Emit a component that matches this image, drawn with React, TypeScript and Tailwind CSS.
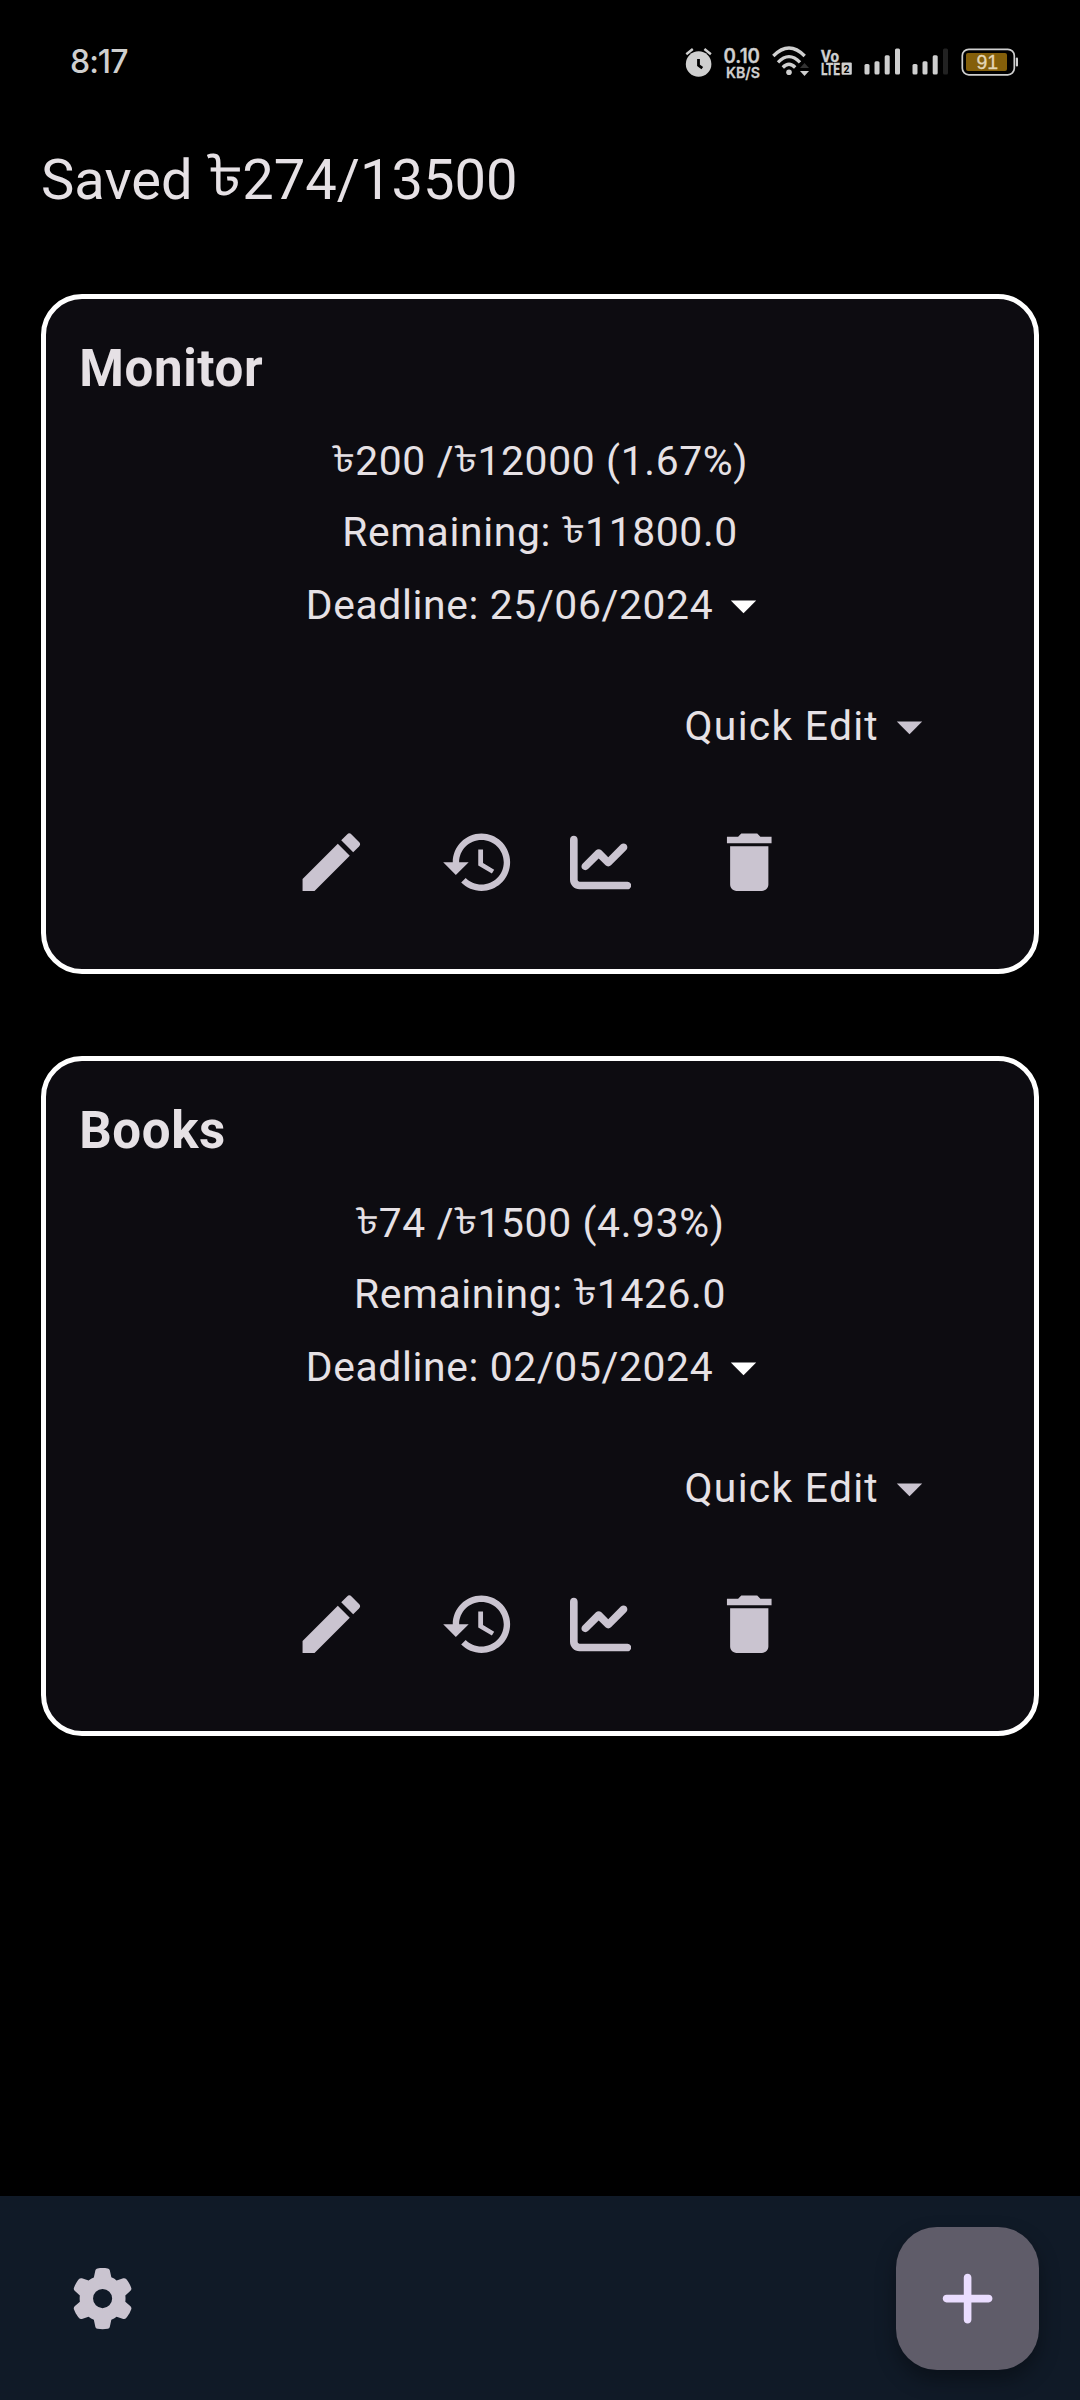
import { FaChartLine, FaGear, FaPlus } from "react-icons/fa6";

type Goal = { name: string; saved: string; target: string; percent: string; remaining: string; deadline: string };

const goals: Goal[] = [
  { name: "Monitor", saved: "200", target: "12000", percent: "1.67", remaining: "11800.0", deadline: "25/06/2024" },
  { name: "Books", saved: "74", target: "1500", percent: "4.93", remaining: "1426.0", deadline: "02/05/2024" },
];

function Taka({ className }: { className: string }) {
  return <span className={`inline-block font-["Noto_Sans_Bengali_UI",Roboto,sans-serif] leading-none ${className}`}>৳</span>;
}

const smallTaka = <Taka className="-translate-y-[3.5px] text-[35.7px]" />;

function Caret({ className }: { className: string }) {
  return (
    <svg viewBox="0 0 24 24" className={className} fill="currentColor">
      <path d="M7 10l5 5 5-5z" />
    </svg>
  );
}

function StatusBar() {
  return (
    <header className="flex h-[123px] items-center justify-between pr-[40px] pl-[70px] text-[#cfcfcf]">
      <span className="font-[Inter] text-[32px] font-medium tracking-[-1px]">8:17</span>
      <svg width="380" height="70" viewBox="0 0 380 70" fill="currentColor" className="mt-[7px] shrink-0">
        <circle cx="38.6" cy="34" r="12.8" />
        <path d="M26.3 24.3L32.8 19M50.9 24.3L44.4 19" stroke="currentColor" strokeWidth="2.4" />
        <path d="M38.5 29v6.300l3.800 2.900" stroke="#000" strokeWidth="2.800" fill="none" />
        <text x="63.5" y="33" fontSize="19.5" fontWeight="600" fontFamily="Inter" stroke="currentColor" strokeWidth="0.3" textLength="36.5" lengthAdjust="spacingAndGlyphs">0.10</text>
        <text x="66" y="47.5" fontSize="15" fontWeight="600" fontFamily="Inter" stroke="currentColor" strokeWidth="0.3" textLength="34" lengthAdjust="spacingAndGlyphs">KB/S</text>
        <g fill="none" stroke="currentColor" strokeWidth="3.3">
          <path d="M113.300 26Q129 10 144.700 26" />
          <path d="M118 32.300Q129 20.800 140 32.300" />
          <path d="M122.800 37.500Q129 31 135.200 37.500" />
        </g>
        <circle cx="129" cy="42.2" r="2.8" />
        <path d="M140 38l4.500-5 4.500 5z" fill="#333" />
        <path d="M140 41l4.500 5 4.500-5z" />
        <text x="161" y="31.5" fontSize="16.5" fontWeight="700" fontFamily="Roboto" stroke="currentColor" strokeWidth="0.4" textLength="18" lengthAdjust="spacingAndGlyphs">Vo</text>
        <text x="161" y="44.7" fontSize="16.5" fontWeight="700" fontFamily="Roboto" stroke="currentColor" strokeWidth="0.4" textLength="19" lengthAdjust="spacingAndGlyphs">LTE</text>
        <rect x="181.6" y="32.5" width="10.2" height="12.3" rx="1" />
        <text x="183.6" y="42.5" fontSize="10.5" fontWeight="700" fontFamily="Roboto" fill="#000">2</text>
        <rect x="204.5" y="34" width="5" height="10.5" rx="1.5" />
        <rect x="214.5" y="31.3" width="5" height="13.2" rx="1.5" />
        <rect x="224.7" y="25.2" width="5" height="19.3" rx="1.5" />
        <rect x="235" y="18.6" width="5" height="25.9" rx="1.5" />
        <rect x="252.5" y="34" width="5" height="10.5" rx="1.5" />
        <rect x="262.5" y="31.3" width="5" height="13.2" rx="1.5" />
        <rect x="272.7" y="25.2" width="5" height="19.3" rx="1.5" />
        <rect x="283" y="18.6" width="5" height="25.9" rx="1.5" fill="#222" />
        <rect x="302.300" y="19.300" width="52" height="25.500" rx="6.500" fill="none" stroke="currentColor" strokeWidth="1.700" />
        <rect x="306" y="23" width="41" height="18" rx="2" fill="#845f0a" />
        <rect x="355.800" y="27.500" width="2.200" height="9" rx="1" />
        <text x="316.5" y="39" fontSize="19.5" fontFamily="Liberation Sans" fill="#e3d6b6" stroke="#e3d6b6" strokeWidth="0.3">91</text>
      </svg>
    </header>
  );
}

function GoalCard({ goal }: { goal: Goal }) {
  return (
    <section className="flex h-[680px] flex-col rounded-[41px] border-[5px] border-white bg-[#0d0c11]">
      <h2 className="mt-[39px] ml-[33.2px] text-[51px] leading-[61px] font-bold tracking-[0.64px]">{goal.name}</h2>
      <div className="mt-[32px] flex flex-col items-center text-[40.8px] leading-[61px] tracking-[0.64px]">
        <p className="h-[61px]">{smallTaka}{goal.saved} /{smallTaka}{goal.target} ({goal.percent}%)</p>
        <p className="mt-[10px] h-[61px]">Remaining: {smallTaka}{goal.remaining}</p>
        <button className="mt-[12px] flex items-center">
          <span>Deadline: {goal.deadline}</span>
          <Caret className="-mt-[1px] size-[61px] text-white" />
        </button>
      </div>
      <button className="mt-[60px] mr-[94px] flex items-center self-end text-[40.8px] leading-[61px] tracking-[1.275px]">
        Quick Edit
        <Caret className="size-[61px] text-[#cac4d0]" />
      </button>
      <div className="mt-[67px] flex items-center pl-[246.5px] text-[#cac4d0]">
        <svg viewBox="0 0 24 24" className="size-[76.5px]" fill="currentColor">
          <path d="M3 17.250V21h3.750L17.810 9.940l-3.750-3.750L3 17.250zM20.710 7.040a1 1 0 0 0 0-1.410l-2.340-2.340a1 1 0 0 0-1.410 0l-1.830 1.830 3.750 3.750 1.830-1.830z" />
        </svg>
        <svg viewBox="0 0 24 24" className="ml-[71px] size-[76.5px]" fill="currentColor">
          <path d="M13 3c-4.970 0-9 4.030-9 9H1l3.890 3.890.07.14L9 12H6c0-3.870 3.130-7 7-7s7 3.130 7 7-3.130 7-7 7c-1.930 0-3.680-.79-4.940-2.060l-1.420 1.420C8.270 19.990 10.510 21 13 21c4.970 0 9-4.030 9-9s-4.030-9-9-9zm-1 5v5l4.280 2.540.72-1.210-3.500-2.080V8H12z" />
        </svg>
        <FaChartLine className="mt-[1px] ml-[53.5px] size-[61.2px]" />
        <svg viewBox="0 0 24 24" className="ml-[79.5px] size-[76.5px]" fill="currentColor">
          <path d="M6 19c0 1.100.9 2 2 2h8c1.100 0 2-.9 2-2V7H6v12zM19 4h-3.500l-1-1h-5l-1 1H5v2h14V4z" />
        </svg>
      </div>
    </section>
  );
}

export default function App() {
  return (
    <div className="flex h-[2400px] w-[1080px] flex-col bg-black font-[Roboto,sans-serif] text-[#e6e1e5]">
      <StatusBar />
      <h1 className="ml-[41px] h-[113px] pt-[22px] text-[56.1px] leading-[71px]">
        Saved <Taka className="-translate-y-[3px]" />274/13500
      </h1>
      <main className="mx-[41px] mt-[58px] flex flex-1 flex-col gap-[82px]">
        {goals.map((g) => (
          <GoalCard key={g.name} goal={g} />
        ))}
      </main>
      <footer className="flex h-[204px] items-center justify-between bg-[#101a27] pr-[41px] pl-[72px]">
        <FaGear className="mt-[2px] size-[61.2px] text-[#cac4d0]" />
        <button className="flex size-[143px] items-center justify-center rounded-[41px] bg-[#5f5c69] pt-[2px] text-[#eaddff] shadow-[0_10px_20px_rgba(0,0,0,0.35)]">
          <FaPlus className="size-[61.2px]" />
        </button>
      </footer>
    </div>
  );
}
